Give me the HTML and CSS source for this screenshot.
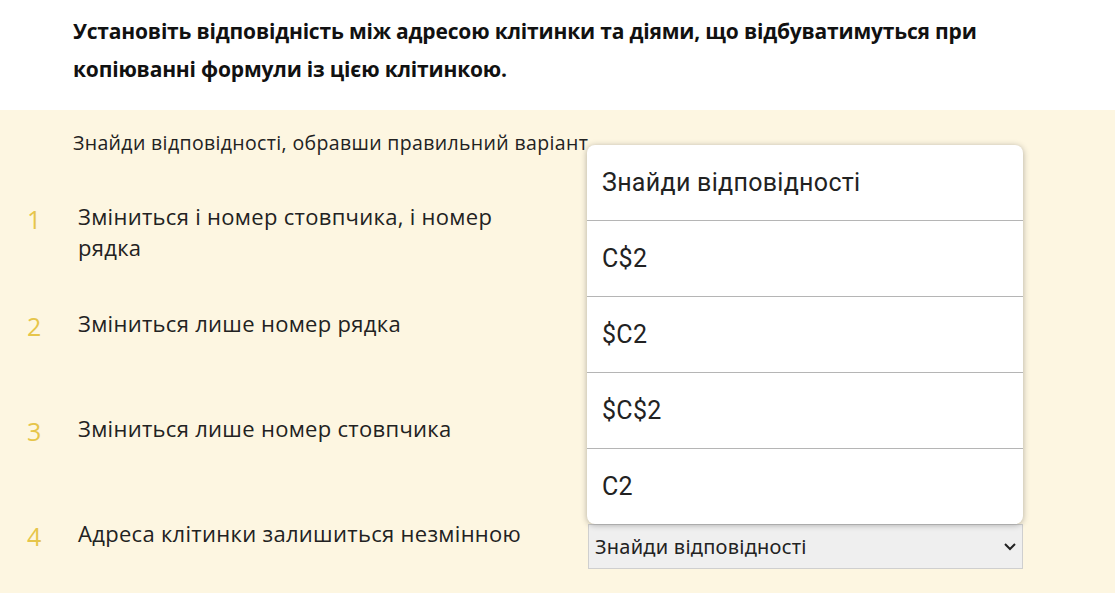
FILE: index.html
```html
<!DOCTYPE html>
<html lang="uk">
<head>
<meta charset="utf-8">
<link rel="stylesheet" href="styles.css">
</head>
<body>
<header class="top">
  <h1 class="title">Установіть відповідність між адресою клітинки та діями, що відбуватимуться при копіюванні формули із цією клітинкою.</h1>
</header>
<main class="task">
  <p class="hint">Знайди відповідності, обравши правильний варіант</p>
  <div class="rows">
    <div class="row">
      <span class="num">1</span>
      <span class="text">Зміниться і номер стовпчика, і номер рядка</span>
      <div class="cell"></div>
    </div>
    <div class="row">
      <span class="num">2</span>
      <span class="text">Зміниться лише номер рядка</span>
      <div class="cell"></div>
    </div>
    <div class="row">
      <span class="num">3</span>
      <span class="text">Зміниться лише номер стовпчика</span>
      <div class="cell"></div>
    </div>
    <div class="row">
      <span class="num">4</span>
      <span class="text">Адреса клітинки залишиться незмінною</span>
      <div class="cell">
        <div class="dd">
          <div class="select">
            <span>Знайди відповідності</span>
            <svg class="chev" width="14" height="9" viewBox="0 0 14 9"><path d="M2 2 L7 7 L12 2" fill="none" stroke="#222" stroke-width="2"/></svg>
          </div>
          <ul class="popup">
            <li>Знайди відповідності</li>
            <li>C$2</li>
            <li>$C2</li>
            <li>$C$2</li>
            <li>C2</li>
          </ul>
        </div>
      </div>
    </div>
  </div>
</main>
</body>
</html>
```
FILE: styles.css
```css
* { box-sizing: border-box; }
html, body { margin: 0; padding: 0; overflow: hidden; }
body {
  width: 1115px;
  height: 593px;
  background: #fdf6e1;
  font-family: "Open Sans", "Noto Sans", sans-serif;
  color: #222;
}
.top {
  background: #fff;
  height: 110px;
  padding: 12px 0 0 73px;
}
.title {
  margin: 0;
  font-size: 21px;
  font-weight: 700;
  line-height: 38px;
  letter-spacing: -0.18px;
  color: #111;
  width: 960px;
}
.task {
  padding: 20px 0 0 0;
}
.hint {
  margin: 0 0 0 73px;
  font-size: 19.5px;
  line-height: 25px;
  letter-spacing: 0.35px;
  color: #222;
}
.rows {
  margin-top: 46px;
}
.row {
  display: grid;
  grid-template-columns: 78px 510px 435px;
  height: 105px;
}
.row:first-child { height: 107px; }
.row:last-child { height: auto; }
.num {
  padding-left: 27px;
  padding-top: 3px;
  font-size: 25px;
  line-height: 30px;
  color: #e6c54a;
  font-weight: 400;
}
.text {
  font-size: 22px;
  line-height: 31px;
  color: #222;
  letter-spacing: 0.3px;
  padding-right: 40px;
}
.cell {
  position: relative;
}
.dd {
  position: relative;
  margin-top: 6px;
}
.select {
  height: 45px;
  background: #efefef;
  border: 1px solid #cfcfcf;
  display: flex;
  align-items: center;
  justify-content: space-between;
  padding: 0 5px 0 6px;
  font-family: "Noto Sans", "Open Sans", sans-serif;
  font-size: 20px;
  letter-spacing: 0.25px;
  color: #222;
}
.popup {
  position: absolute;
  left: -1px;
  bottom: 100%;
  width: 436px;
  margin: 0;
  padding: 0;
  list-style: none;
  background: #fff;
  border-radius: 8px;
  box-shadow: 0 1px 6px rgba(0,0,0,0.3);
  overflow: hidden;
}
.popup li {
  height: 76px;
  display: flex;
  align-items: center;
  padding-left: 15px;
  font-family: Roboto, sans-serif;
  font-size: 25px;
  letter-spacing: 0.3px;
  color: #222;
  border-top: 1px solid #b5b5b5;
}
.popup li:first-child { border-top: none; height: 75px; }
```
